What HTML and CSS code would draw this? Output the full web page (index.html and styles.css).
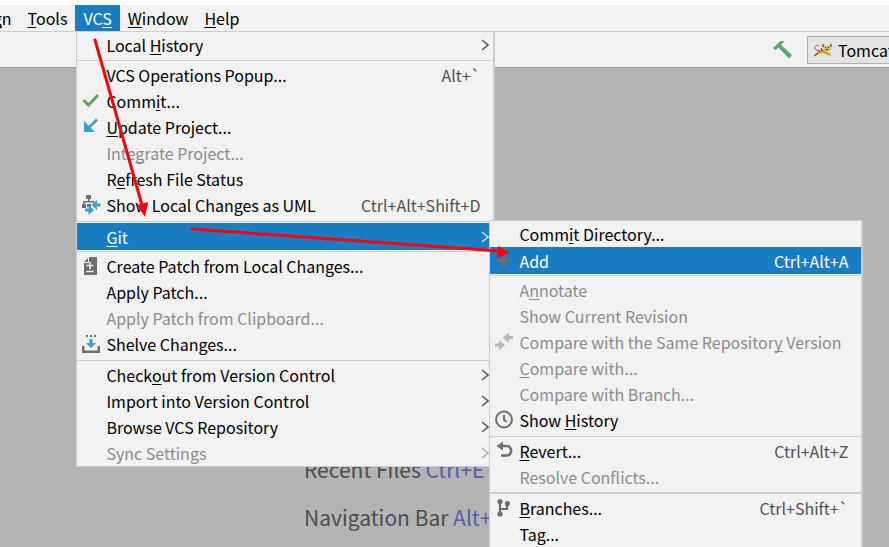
FILE: index.html
```html
<!DOCTYPE html>
<html lang="en">
<head>
<meta charset="utf-8">
<title>VCS menu</title>
<link rel="stylesheet" href="styles.css">
</head>
<body>
<div class="app">
  <header>
    <nav class="menubar">
      <button type="button">Desi<u>g</u>n</button>
      <button type="button"><u>T</u>ools</button>
      <div class="menu-anchor">
        <button type="button" class="open">VC<u>S</u></button>
        <div class="menu vcs-menu">
          <div class="group first">
            <button type="button" class="row"><span class="icon"></span><span class="label">Local <u>H</u>istory</span><svg class="chevron" viewBox="0 0 8 12"><path d="M1 1l6 5-6 5"/></svg></button>
          </div>
          <div class="group">
            <button type="button" class="row"><span class="icon"></span><span class="label">VCS Operations Popup...</span><kbd>Alt+`</kbd></button>
            <button type="button" class="row"><svg class="icon" viewBox="0 0 18 18"><path d="M1.500 8l5 5L16 3" fill="none" stroke="#59a869" stroke-width="3"/></svg><span class="label">Comm<u>i</u>t...</span></button>
            <button type="button" class="row"><svg class="icon" viewBox="0 0 18 18"><path d="M15 1.500L7 9.500" stroke="#389fd6" stroke-width="2.500"/><path d="M2 3v11h11z" fill="#389fd6"/></svg><span class="label"><u>U</u>pdate Project...</span></button>
            <button type="button" class="row" disabled><span class="icon"></span><span class="label">Inte<u>g</u>rate Project...</span></button>
            <button type="button" class="row"><span class="icon"></span><span class="label">R<u>e</u>fresh File Status</span></button>
            <button type="button" class="row"><svg class="icon" viewBox="0 0 18 18"><path d="M4 -1h5v4H4zM0 8h4v4H0zM5 8h4v3H5zM6 3h1.500v3H6zM1 5h11v1.500H1zM1 5h1.500v4H1zM10.500 5H12v2h-1.500z" fill="#6e6e6e"/><path d="M18.500 7.500v3h-3.500v3.500L9.500 9l5.500-5v3.500zM3 12.500v3h3.500v3.500l5.500-5-5.500-5v3.500z" fill="#389fd6"/></svg><span class="label">Show Local Changes as UML</span><kbd>Ctrl+Alt+Shift+D</kbd></button>
          </div>
          <div class="group highlighted">
            <div class="submenu-anchor">
              <button type="button" class="row selected"><span class="icon"></span><span class="label"><u>G</u>it</span><svg class="chevron" viewBox="0 0 8 12"><path d="M1 1l6 5-6 5"/></svg></button>
              <div class="menu git-menu">
                <div class="group first">
                  <button type="button" class="row"><span class="icon"></span><span class="label">Comm<u>i</u>t Directory...</span></button>
                  <button type="button" class="row selected"><svg class="icon" viewBox="0 0 18 18"><path d="M7.500 2.500h3v5h5v3h-5v5h-3v-5h-5v-3h5z" fill="#6e6e6e"/></svg><span class="label">Add</span><kbd>Ctrl+Alt+A</kbd></button>
                </div>
                <div class="group">
                  <button type="button" class="row" disabled><span class="icon"></span><span class="label">A<u>n</u>notate</span></button>
                  <button type="button" class="row" disabled><span class="icon"></span><span class="label">Show Current Revision</span></button>
                  <button type="button" class="row" disabled><svg class="icon" viewBox="0 0 18 18"><path d="M18 3v3h-4v4L8 4.500l6-5V3zM0 10.500v3h4v4l6-5.500-6-5v3.500z" fill="#b9b9b9"/></svg><span class="label">Compare with the Same Repositor<u>y</u> Version</span></button>
                  <button type="button" class="row" disabled><span class="icon"></span><span class="label"><u>C</u>ompare with...</span></button>
                  <button type="button" class="row" disabled><span class="icon"></span><span class="label">Compare with Branch...</span></button>
                  <button type="button" class="row"><svg class="icon" viewBox="0 0 18 18"><circle cx="9" cy="8.500" r="7.900" fill="none" stroke="#6e6e6e" stroke-width="2"/><path d="M9 4v5l3 2" fill="none" stroke="#6e6e6e" stroke-width="2"/></svg><span class="label">Show <u>H</u>istory</span></button>
                </div>
                <div class="group heavy">
                  <button type="button" class="row"><svg class="icon" viewBox="0 0 18 18"><path d="M6 4h5.500a4.700 4.700 0 0 1 0 9.500H6" fill="none" stroke="#6e6e6e" stroke-width="2.600"/><path d="M1.500 4L8-.5v9z" fill="#6e6e6e"/></svg><span class="label"><u>R</u>evert...</span><kbd>Ctrl+Alt+Z</kbd></button>
                  <button type="button" class="row" disabled><span class="icon"></span><span class="label">Resolve Conflicts...</span></button>
                </div>
                <div class="group last">
                  <button type="button" class="row"><svg class="icon" viewBox="0 0 18 18"><path d="M5 2v13M5 10h7V5" fill="none" stroke="#6e6e6e" stroke-width="2.200"/><circle cx="5" cy="2.500" r="2.600" fill="#6e6e6e"/><circle cx="5" cy="15" r="2.600" fill="#6e6e6e"/><circle cx="12.500" cy="4.500" r="2.600" fill="#6e6e6e"/></svg><span class="label"><u>B</u>ranches...</span><kbd>Ctrl+Shift+`</kbd></button>
                  <button type="button" class="row"><span class="icon"></span><span class="label">Tag...</span></button>
                </div>
              </div>
            </div>
          </div>
          <div class="group">
            <button type="button" class="row"><svg class="icon" viewBox="0 0 18 18"><path d="M2 5l4-4v4zM7 0h8v18H2V6h5z" fill="#6e6e6e"/><path d="M8 5v7M4.500 8.500h7M4.500 14.500h7" stroke="#f2f2f2" stroke-width="1.500"/></svg><span class="label">Create Patch from Local Changes...</span></button>
            <button type="button" class="row"><span class="icon"></span><span class="label">Apply Patch...</span></button>
            <button type="button" class="row" disabled><span class="icon"></span><span class="label">Apply Patch from Clipboard...</span></button>
            <button type="button" class="row"><svg class="icon" viewBox="0 0 18 18"><path d="M4 0h2v2H4zM8 0h2v2H8zM12 0h2v2h-2zM0 11h2.500v4.500h13V11H18v7H0z" fill="#6e6e6e"/><path d="M7.500 4h3v4h3.500L9 13 4 8h3.500z" fill="#389fd6"/></svg><span class="label">Shelve Changes...</span></button>
          </div>
          <div class="group end">
            <button type="button" class="row"><span class="icon"></span><span class="label">Check<u>o</u>ut from Version Control</span><svg class="chevron" viewBox="0 0 8 12"><path d="M1 1l6 5-6 5"/></svg></button>
            <button type="button" class="row"><span class="icon"></span><span class="label">Import into Version Control</span><svg class="chevron" viewBox="0 0 8 12"><path d="M1 1l6 5-6 5"/></svg></button>
            <button type="button" class="row"><span class="icon"></span><span class="label">Browse VCS Repository</span><svg class="chevron" viewBox="0 0 8 12"><path d="M1 1l6 5-6 5"/></svg></button>
            <button type="button" class="row" disabled><span class="icon"></span><span class="label">Sync Settings</span><svg class="chevron" viewBox="0 0 8 12"><path d="M1 1l6 5-6 5"/></svg></button>
          </div>
        </div>
      </div>
      <button type="button"><u>W</u>indow</button>
      <button type="button"><u>H</u>elp</button>
    </nav>
    <div class="toolbar">
      <button type="button" class="build" aria-label="Build"><svg viewBox="0 0 20 20"><path d="M0 8L7.500 1h4L8 5l11 10-3 3.500L5.500 7.500 2.500 10z" fill="#59a869"/></svg></button>
      <button type="button" class="config"><svg viewBox="0 0 18 14"><path d="M4 8C-1 6 1 1 5 3" fill="none" stroke="#777" stroke-width="1"/><path d="M1 12l3-4 4-2 4 2 5 3v1.500l-4-.5-4-2-4 1-3 2z" fill="#d8a23a"/><path d="M9 1l2 1.500h4L17 1v6l-3 1.500L9.500 7z" fill="#e5bd55"/><path d="M9 1v3M17 1v3M0 13l4-3M4 7l2 2M7 5l1 3" fill="none" stroke="#3c3525" stroke-width="1"/><path d="M11 4h1v1h-1zM14 4h1v1h-1zM12 6h2v1h-2z" fill="#2b2b2b"/></svg>Tomcat</button>
    </div>
  </header>
  <main>
    <p>Recent Files <span>Ctrl+E</span></p>
    <p>Navigation Bar <span>Alt+Home</span></p>
  </main>
  <svg class="arrows" aria-hidden="true"><path d="M95 40l47 165M192 229l306 22" stroke="#f00" stroke-width="3" stroke-linecap="round"/><path d="M145 217l-8-12 11-3zM510 253l-13 5 1-12z" fill="#f00"/></svg>
</div>
</body>
</html>
```
FILE: styles.css
```css
* { box-sizing: border-box; }

body {
  margin: 0;
  background: #b4b4b4;
  color: #000;
  font: 16px/26px "Noto Sans CJK SC", "Noto Sans", sans-serif;
}

button {
  margin: 0;
  border: 0;
  background: none;
  color: inherit;
  font: inherit;
}

u {
  text-decoration-thickness: 1px;
  text-underline-offset: 2px;
  text-decoration-skip-ink: none;
}

.app {
  position: relative;
  height: 100vh;
  overflow: hidden;
}

header { background: #f2f2f2; }

.menubar {
  display: flex;
  margin-left: -47px;
  border-top: 5px solid #fff;
  border-bottom: 1px solid #cdcdcd;
}

.menubar > button,
.open {
  display: block;
  padding: 0 8px;
  white-space: nowrap;
}

.open { background: #1a7dc4; color: #fff; }

.menu-anchor,
.submenu-anchor { position: relative; }

.menu {
  position: absolute;
  border: 1px solid #cdcdcd;
  border-right-width: 2px;
  background: #f2f2f2;
  color: #000;
}

.vcs-menu {
  top: 100%;
  left: 1px;
  z-index: 1;
  width: 419px;
}

.git-menu {
  top: -3px;
  left: 412px;
  z-index: 2;
  width: 374px;
}

.group {
  padding: 1px 0 3px;
  border-top: 1px solid #cdcdcd;
}

.group.first { padding: 0 0 1px; border-top: 0; }
.vcs-menu > .group.first { padding-bottom: 2px; }
.group.highlighted { padding: 1px 0; }
.group.heavy { padding-bottom: 2px; }
.group.last { border-top-width: 2px; }
.group.end { padding-bottom: 0; }

.row {
  display: flex;
  align-items: center;
  width: 100%;
  height: 26px;
  padding: 0 13px 0 5px;
  text-align: left;
  white-space: nowrap;
}

.row:disabled { color: #8c8c8c; }
.row.selected { height: 27px; background: #1a7dc4; color: #fff; }

.icon {
  flex: none;
  width: 18px;
  height: 18px;
  margin-right: 6px;
  overflow: visible;
}

.label { flex: 1; }

kbd { color: #505050; font: inherit; }
.selected kbd { color: #fff; }

.chevron {
  width: 8px;
  height: 12px;
  margin-right: -9px;
  fill: none;
  stroke: #5a5a5a;
  stroke-width: 1.5;
}

.selected .chevron { stroke: #d0e4f3; }
.row:disabled .chevron { stroke: #aaa; }

.toolbar {
  display: flex;
  justify-content: flex-end;
  align-items: center;
  gap: 14px;
  height: 36px;
  border-bottom: 1px solid #999;
}

.build { padding: 0; }
.build svg { display: block; width: 20px; height: 20px; }

.config {
  display: flex;
  align-items: center;
  gap: 6px;
  width: 142px;
  height: 28px;
  margin-right: -60px;
  padding: 0 6px;
  border: 1px solid #b0b0b0;
  background: #e4e4e4;
}

.config svg { width: 18px; height: 14px; }

main {
  padding: 386px 0 0 304px;
  color: #4d4d4d;
  font-size: 21px;
  line-height: 30px;
}

main p { margin: 0 0 18px; white-space: nowrap; }
main span { color: #5261a6; }

.arrows {
  position: absolute;
  inset: 0;
  z-index: 3;
  width: 100%;
  height: 100%;
  pointer-events: none;
}
```
